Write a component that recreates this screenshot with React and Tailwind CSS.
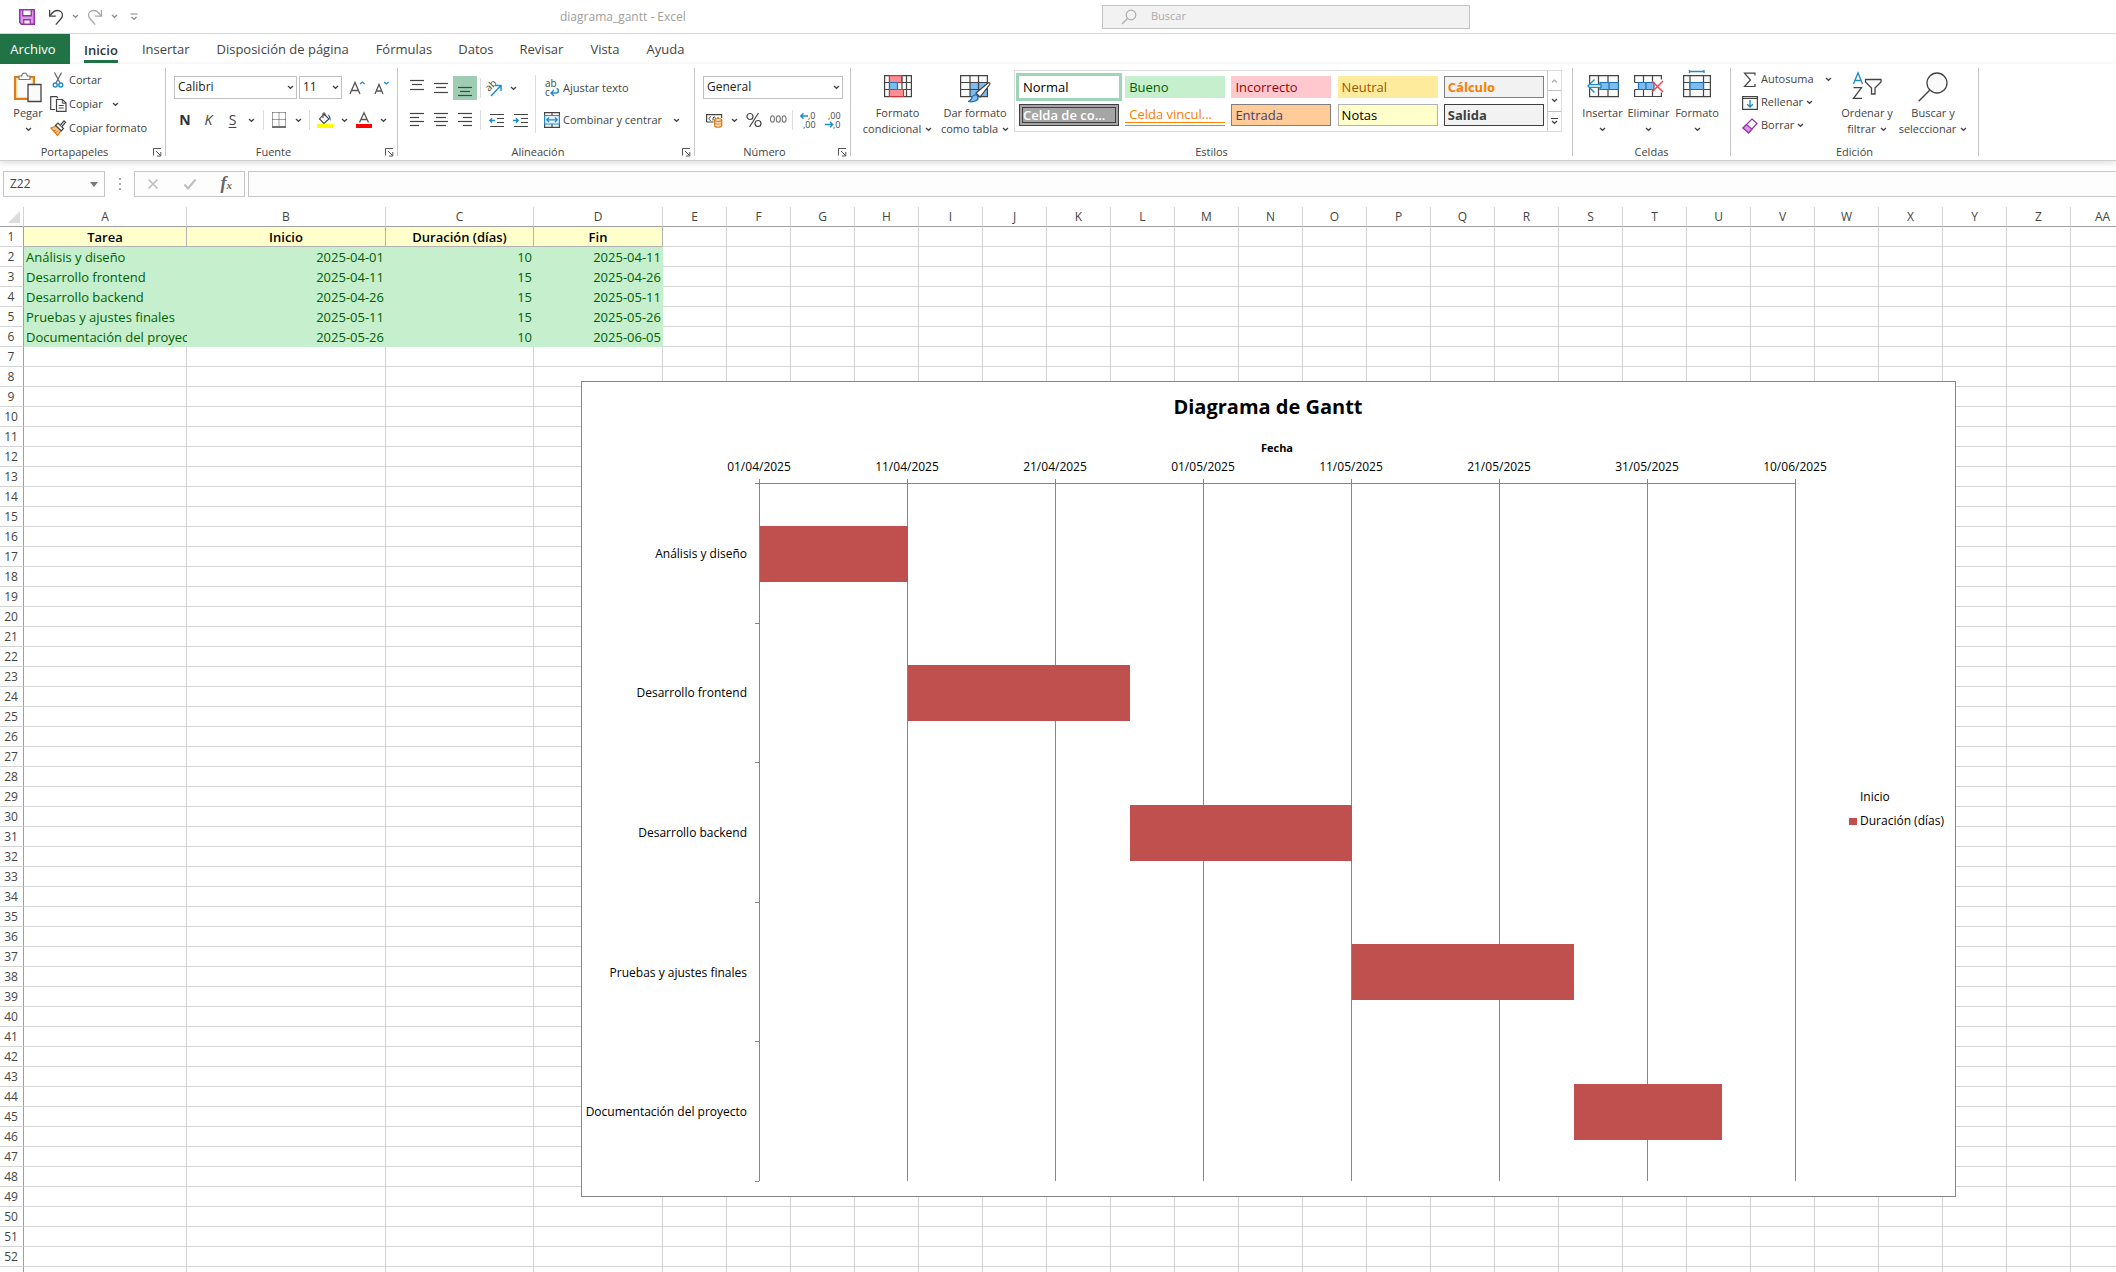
import React from "react";

const INK = "#444444";
const BLUE = "#1e8bcd";

/* ---------- Icons ---------- */

function Chevron({ color = INK }) {
  return (
    <svg width="7" height="5" viewBox="0 0 7 5" fill="none" className="shrink-0">
      <path d="M1 1l2.5 2.3L6 1" stroke={color} strokeWidth="1.3" />
    </svg>
  );
}

function Icon({ w = 16, h = 16, children }) {
  return (
    <svg width={w} height={h} viewBox={`0 0 ${w} ${h}`} fill="none" className="shrink-0 overflow-visible" aria-hidden="true">
      {children}
    </svg>
  );
}

const SaveIcon = () => (
  <Icon>
    <path d="M.75.75h14.5v14.5H2.5L.75 13.5z" fill="#d59be0" stroke="#9a2fae" strokeWidth="1.5" />
    <path d="M3.75.75h8.5v6h-8.5z" fill="#fff" stroke="#9a2fae" strokeWidth="1.3" />
    <path d="M4.75 15.25v-4.5h6.5v4.5z" fill="#fff" stroke="#9a2fae" strokeWidth="1.3" />
  </Icon>
);
const UndoIcon = ({ color = INK, flip }) => (
  <Icon>
    <g transform={flip ? "translate(16 0) scale(-1 1)" : undefined} stroke={color} strokeWidth="1.3">
      <path d="M1.6.8v6.4h6.2" />
      <path d="M1.8 7C4 3.6 6.5 1.5 9.5 1.5c3 0 5 2.2 5 4.6 0 2-1 3.3-2.4 4.7L7.8 15.6" />
    </g>
  </Icon>
);
const CustomizeIcon = () => (
  <Icon w={8} h={8}>
    <path d="M.5 1h7M1.5 4L4 6.500 6.500 4" stroke="#8a8a8a" strokeWidth="1.2" />
  </Icon>
);
const PasteIcon = () => (
  <Icon w={28} h={30}>
    <path d="M1 5h19v22H1z" fill="#fbd9a0" stroke="#e07b1a" strokeWidth="2" />
    <path d="M3.5 7h14v18h-14z" fill="#fafafa" />
    <path d="M5 7.500V4h2.500C8 2 9 1 10.500 1S13 2 13.500 4H16v3.500z" fill="#fff" stroke="#7a7a7a" strokeWidth="1.2" />
    <path d="M14 12.500h13v17H14z" fill="#fafafa" stroke={INK} strokeWidth="1.3" />
  </Icon>
);
const CutIcon = () => (
  <Icon>
    <path d="M4.500.5L10 11M11.500.5L6 11" stroke="#6a6a6a" strokeWidth="1.3" />
    <circle cx="5.2" cy="13" r="2" stroke={BLUE} strokeWidth="1.4" />
    <circle cx="10.8" cy="13" r="2" stroke={BLUE} strokeWidth="1.4" />
  </Icon>
);
const CopyIcon = () => (
  <Icon w={17} h={16}>
    <path d="M5 13.5H.7V.7h6L8 2" stroke={INK} strokeWidth="1.2" />
    <path d="M6.5 3.5h6L16 7v8.3H6.500z" fill="#fff" stroke={INK} strokeWidth="1.2" />
    <path d="M12.300 3.500v3.700H16M8.700 9.500h5M8.700 12h5" stroke={INK} />
  </Icon>
);
const BrushIcon = () => (
  <Icon>
    <path d="M1 8l5.5-2L11 10.5l-3.500 5z" fill="#fbc98a" stroke="#e07b1a" strokeWidth="1.3" />
    <path d="M3 11l3-1M5 13l3-2" stroke="#e07b1a" />
    <path d="M5.500 5.500L8 3l5.500 5.500-2.300 2.300z" fill="#fff" stroke={INK} strokeWidth="1.2" />
    <path d="M10.500 5L14 .8l1.500 1.500L12 6.500" fill="#fff" stroke={INK} strokeWidth="1.2" />
  </Icon>
);
const LauncherIcon = () => (
  <Icon w={9} h={9}>
    <path d="M.5 7.500V.5H8M3 3l4.500 4.500M7.800 4v4H4" stroke="#555" />
  </Icon>
);
const BordersIcon = () => (
  <Icon>
    <path d="M1.5.5v13M8 .5v13M14.500.5v13M1.500.5h13M1.500 7.500h13" stroke={INK} strokeDasharray="1 1" />
    <path d="M1 15h14" stroke="#222" strokeWidth="1.3" />
  </Icon>
);
const FillIcon = () => (
  <Icon>
    <path d="M7 2l5 5-5 4.500L2.500 7z" fill="#fafafa" stroke={INK} strokeWidth="1.1" />
    <path d="M6 6V1.500C6 .5 8 .5 8 1.500V4" stroke={INK} />
    <path d="M10.500 2.500c3 .5 3.500 3.500 3 6.500-1.300-1.500-1-4-3-6.500z" fill="#1e6fb8" />
    <path d="M0 12h16v4H0z" fill="#ffff00" />
  </Icon>
);
const FontColorIcon = () => (
  <Icon>
    <path d="M3.500 10.500L8 .8l4.500 9.700M5 7.500h6" stroke="#555" strokeWidth="1.3" />
    <path d="M0 12h16v4H0z" fill="#ff0000" />
  </Icon>
);
const GrowIcon = ({ small }) => (
  <Icon w={17} h={16}>
    {small ? (
      <path d="M1 14l4-9.500L9 14M2.500 11h5" stroke="#555" strokeWidth="1.3" />
    ) : (
      <path d="M1 14L6 2.500 11 14M2.800 10.500h6.400" stroke="#555" strokeWidth="1.3" />
    )}
    {small ? (
      <path d="M10 2l2.300 2L14.600 2" stroke={BLUE} strokeWidth="1.3" />
    ) : (
      <path d="M11 4l2.300-2L15.600 4" stroke={BLUE} strokeWidth="1.3" />
    )}
  </Icon>
);
const LINES = {
  top: [[0, 0.5, 14], [2, 4.5, 12], [0, 9.5, 14]],
  middle: [[0, 3.5, 14], [2, 7.5, 12], [0, 12.5, 14]],
  bottom: [[0, 7.5, 14], [2, 11.5, 12], [0, 15.5, 14]],
  left: [[0, 1.5, 14], [0, 5.5, 9], [0, 9.5, 14], [0, 13.5, 9]],
  center: [[0, 1.5, 14], [2, 5.5, 12], [0, 9.5, 14], [2, 13.5, 12]],
  right: [[0, 1.5, 14], [5, 5.5, 14], [0, 9.5, 14], [5, 13.5, 14]],
};
const AlignIcon = ({ kind }) => (
  <Icon w={14} h={17}>
    {LINES[kind].map(([a, y, b], i) => (
      <path key={i} d={`M${a} ${y}H${b}`} stroke={INK} strokeWidth="1.2" />
    ))}
  </Icon>
);
const OrientIcon = () => (
  <Icon w={17} h={17}>
    <text fontSize="10" fill={INK} transform="translate(4 12) rotate(-45)" fontFamily="Open Sans, sans-serif">ab</text>
    <path d="M6 16l9.500-10M10.500 5.500H16V11" stroke={BLUE} strokeWidth="1.4" />
  </Icon>
);
const WrapIcon = () => (
  <Icon w={15} h={17}>
    <text x="0" y="7" fontSize="10" fill={INK} fontFamily="Open Sans, sans-serif">ab</text>
    <text x="0" y="16" fontSize="10" fill={INK} fontFamily="Open Sans, sans-serif">c</text>
    <path d="M11.500 8.500c2.500.5 2.500 4.500-.5 4.500H6.500M9 10l-3 3 3 3" stroke={BLUE} strokeWidth="1.4" />
  </Icon>
);
const MergeIcon = () => (
  <Icon>
    <path d="M.6.6h14.800v14.800H.6zM8 .6v14.800" stroke={INK} strokeWidth="1.2" />
    <path d="M.6 3.500h14.800V12H.6z" fill="#e3f1fb" stroke={BLUE} strokeWidth="1.2" />
    <path d="M3 7.800h10M5 5.500L2.800 7.800 5 10M11 5.500l2.200 2.300L11 10" stroke={BLUE} strokeWidth="1.2" />
  </Icon>
);
const IndentIcon = ({ out }) => (
  <Icon w={15} h={15}>
    <path d="M1 1.500h14M8 5.500h7M8 9.500h7M1 13.500h14" stroke={INK} strokeWidth="1.2" />
    {out ? (
      <path d="M.8 7.500H6M3 5.200L.8 7.500 3 9.800" stroke={BLUE} strokeWidth="1.4" />
    ) : (
      <path d="M0 7.500h5M3 5.200l2.200 2.300L3 9.800" stroke={BLUE} strokeWidth="1.4" />
    )}
  </Icon>
);
const MoneyIcon = () => (
  <Icon w={17} h={16}>
    <path d="M.6 10V2.600h15V6M.6 10h7" stroke={INK} strokeWidth="1.2" />
    <path d="M5 4.800C2.500 4.800 2.500 8.500 5 8.500M7 8.500V6l1.200-1.200L9.500 6v2.500M12 5v2" stroke={INK} />
    <path d="M8.700 8v5.500c0 2.200 7 2.200 7 0V8" fill="#fde3c8" stroke="#e07b1a" strokeWidth="1.3" />
    <ellipse cx="12.2" cy="8" rx="3.5" ry="1.4" fill="#fff" stroke="#e07b1a" strokeWidth="1.3" />
    <path d="M8.700 10.800c0 1.800 7 1.800 7 0" stroke="#e07b1a" />
  </Icon>
);
const PercentIcon = () => (
  <Icon>
    <circle cx="4" cy="4.5" r="3" stroke={INK} strokeWidth="1.2" />
    <circle cx="12" cy="11.5" r="3" stroke={INK} strokeWidth="1.2" />
    <path d="M12.500 1l-9 14" stroke={INK} strokeWidth="1.2" />
  </Icon>
);
const ThousandsIcon = () => (
  <Icon w={17} h={10}>
    {[2.5, 8.3, 14.1].map((x) => (
      <ellipse key={x} cx={x} cy="4" rx="2" ry="3.3" stroke="#777" strokeWidth="1.1" />
    ))}
  </Icon>
);
const DecimalIcon = ({ less }) => (
  <Icon>
    <text x={less ? 3 : 8} y="7" fontSize="9" fill={INK} fontFamily="Open Sans, sans-serif">{less ? ",00" : ",0"}</text>
    <text x={less ? 8 : 3} y="16" fontSize="9" fill={INK} fontFamily="Open Sans, sans-serif">{less ? ",0" : ",00"}</text>
    {less ? (
      <path d="M0 12.500h7.500M5 9.800l2.700 2.700L5 15.200" stroke={BLUE} strokeWidth="1.4" />
    ) : (
      <path d="M1 4h7M3.500 1.300L.8 4l2.700 2.700" stroke={BLUE} strokeWidth="1.4" />
    )}
  </Icon>
);
const CondFormatIcon = () => (
  <Icon w={28} h={26}>
    <path d="M.6 3.600h26.800v21H.6z" fill="#fafafa" />
    <path d="M.6 3.600h26.800v21H.6zM.6 10.500h26.800M.6 17.500h26.800M5.500 3.600v21M18 3.600v21M22.500 3.600v21" stroke={INK} strokeWidth="1.2" />
    <path d="M5.500 3.600h12v6.900h-12z" fill="#ff8f95" stroke="#d13438" strokeWidth="1.2" />
    <path d="M5.500 10.500h8v7h-8z" fill="#7fbcee" stroke="#1e6fb8" strokeWidth="1.2" />
    <path d="M5.500 17.500h14v7h-14z" fill="#ff8f95" stroke="#d13438" strokeWidth="1.2" />
  </Icon>
);
const TableFormatIcon = () => (
  <Icon w={31} h={30}>
    <path d="M.6 3.600h26.800v21H.6z" fill="#fafafa" />
    <path d="M10 10.500h17.400v14H10z" fill="#7fbcee" />
    <path d="M.6 3.600h26.800v21H.6zM.6 10.500h26.800M.6 17.500h26.800M10 3.600v21M18.500 3.600v21" stroke={INK} strokeWidth="1.2" />
    <path d="M16 21l12-10c1.500-.8 2.500.3 1.700 1.500L20 25z" fill="#fff" stroke={INK} strokeWidth="1.2" />
    <path d="M8 29.500c3 0 3-2.500 4.500-5s5-2 5.500 1-4 5-10 4z" fill="#7fbcee" stroke="#1e6fb8" strokeWidth="1.2" />
  </Icon>
);
const InsertCellsIcon = () => (
  <Icon w={32} h={26}>
    <path d="M2.600 3.600h28.800v21H2.600zM11.500 3.600v21M21 3.600v21" fill="#fafafa" stroke={INK} strokeWidth="1.2" />
    <path d="M13 10.500h18.400v7H13zM22 10.500v7" fill="#7fbcee" stroke="#1e6fb8" strokeWidth="1.2" />
    <path d="M1 14l6.500-6.500v5H14v3H7.500v5z" fill="#fff" />
    <path d="M7.500 7.500L1 14l6.500 6.500M2.500 12.600H14v2.800H2.500" stroke={BLUE} strokeWidth="1.4" />
  </Icon>
);
const DeleteCellsIcon = () => (
  <Icon w={30} h={26}>
    <path d="M.6 10.500V3.600h26.800v4M.6 17.500v7h26.800v-4M9.500 3.600v7M18.500 3.600v7M9.500 17.500v7M18.500 17.500v7M.6 10.500h4M.6 17.500h20" stroke={INK} strokeWidth="1.2" />
    <path d="M4.500 10.500H20v7H4.500zM12 10.500v7" fill="#7fbcee" stroke="#1e6fb8" strokeWidth="1.2" />
    <path d="M18 9l11 11M29 9L18 20" stroke="#f0484d" strokeWidth="1.5" />
  </Icon>
);
const FormatCellsIcon = () => (
  <Icon w={28} h={28}>
    <path d="M.6 5.600h26.800v21H.6zM.6 12.500h26.800M.6 19.500h26.800M7 5.600v21M20.500 5.600v21" fill="#fafafa" stroke={INK} strokeWidth="1.2" />
    <path d="M7 12.500h13.500v7H7z" fill="#7fbcee" stroke="#1e6fb8" strokeWidth="1.2" />
    <path d="M6.500 1.500H21M6.500 0v3M21 0v3" stroke={BLUE} strokeWidth="1.3" />
  </Icon>
);
const SigmaIcon = () => (
  <Icon>
    <path d="M13 3.500V1.200H2.500L8.500 8l-6 6.500H13V12" stroke={INK} strokeWidth="1.2" />
  </Icon>
);
const FillDownIcon = () => (
  <Icon>
    <path d="M.6 1.600h14.800v12.800H.6zM.6 3.500h14.800" fill="#fafafa" stroke={INK} strokeWidth="1.2" />
    <path d="M8 5v7M5.200 9.300L8 12.100l2.800-2.800" stroke={BLUE} strokeWidth="1.4" />
  </Icon>
);
const EraserIcon = () => (
  <Icon>
    <path d="M10 1l5 4.500L6.500 15 1 10z" fill="#fff" stroke="#9a2fae" strokeWidth="1.2" />
    <path d="M1 10l3.500-3.500L10 11l-3.500 4z" fill="#d59be0" stroke="#9a2fae" strokeWidth="1.2" />
  </Icon>
);
const SortIcon = () => (
  <Icon w={30} h={28}>
    <path d="M1.500 12L6 .8 10.500 12M3 8.500h6" stroke={BLUE} strokeWidth="1.4" />
    <path d="M1.500 15.600h8L1.500 26.400h8.500" stroke={INK} strokeWidth="1.3" />
    <path d="M13.500 7.500H29V10l-6 6v6h-3.500v-6l-6-6z" fill="#fff" stroke={INK} strokeWidth="1.3" />
  </Icon>
);
const FindIcon = () => (
  <Icon w={30} h={30}>
    <circle cx="19" cy="11" r="10" fill="#fafafa" stroke={INK} strokeWidth="1.3" />
    <path d="M11.700 18.300L.7 29.300" stroke={INK} strokeWidth="1.4" />
  </Icon>
);
const SearchIcon = () => (
  <Icon>
    <circle cx="10" cy="6" r="4.8" stroke="#adadad" strokeWidth="1.2" />
    <path d="M6.500 9.500l-5.500 5.500" stroke="#adadad" strokeWidth="1.2" />
  </Icon>
);

/* ---------- Ribbon pieces ---------- */

function Group({ label, width, launcher, children }) {
  return (
    <>
      <section className={`flex h-[92px] shrink-0 flex-col ${width}`} aria-label={label}>
        <div className="flex h-[76px] justify-start">{children}</div>
        <div className="flex h-4 items-center">
          <span className={`flex-1 text-center text-[11px] leading-4 ${launcher ? "pr-1" : ""}`}>{label}</span>
          {launcher && (
            <button aria-label={`Opciones de ${label}`} className="mr-[3px] flex">
              <LauncherIcon />
            </button>
          )}
        </div>
      </section>
      <div className="h-[88px] w-px shrink-0 bg-[#c6c6c6]" />
    </>
  );
}

function Sep({ tall }) {
  return <div className={`w-px shrink-0 bg-[#dcdcdc] ${tall ? "h-[58px]" : "h-5"}`} />;
}

function Tool({ label, children, width = "w-6", arrow, active }) {
  return (
    <button
      aria-label={label}
      className={`flex h-6 shrink-0 items-center justify-center gap-2 ${width} ${active ? "bg-[#9fcdb3]" : ""}`}
    >
      {children}
      {arrow && <Chevron />}
    </button>
  );
}

function Combo({ label, value, width }) {
  return (
    <div className={`relative h-6 shrink-0 ${width}`}>
      <select
        aria-label={label}
        defaultValue={value}
        className="block h-[23px] w-full appearance-none border border-[#c0c0c0] bg-white pb-0.5 pl-[3px] text-xs text-[#222]"
      >
        <option>{value}</option>
      </select>
      <span className="pointer-events-none absolute top-[9px] right-[3px]">
        <Chevron />
      </span>
    </div>
  );
}

function TextTool({ icon, label, arrow, height = "h-6" }) {
  return (
    <button className={`flex items-center gap-[3px] text-[11px] whitespace-nowrap ${height}`}>
      <span className="flex w-4 justify-center">{icon}</span>
      <span>{label}</span>
      {arrow && <span className={arrow}><Chevron /></span>}
    </button>
  );
}

function BigTool({ icon, lines, width, iconTop = "pt-0.5" }) {
  return (
    <button className={`flex shrink-0 flex-col items-center text-[11px] leading-4 whitespace-nowrap ${width}`}>
      <span className={`flex h-8 items-start ${iconTop}`}>{icon}</span>
      <span className="mt-[3px]">{lines[0]}</span>
      <span className="flex h-4 items-center gap-1">
        {lines[1]}
        <Chevron />
      </span>
    </button>
  );
}

const STYLES = [
  ["Normal", "bg-white pl-1 text-black outline-3 outline-[#9fd5b7]"],
  ["Bueno", "bg-[#c6efce] pl-1 text-[#006100]"],
  ["Incorrecto", "bg-[#ffc7ce] pl-1 text-[#9c0006]"],
  ["Neutral", "bg-[#ffeb9c] pl-1 text-[#9c5700]"],
  ["Cálculo", "border border-[#7f7f7f] bg-[#f2f2f2] pl-[3px] font-bold text-[#fa7d00]"],
  ["Celda de co...", "border-4 border-double border-[#3f3f3f] bg-[#a5a5a5] font-semibold text-white"],
  ["Celda vincul...", "border-b-4 border-double border-[#ff8001] bg-white pt-0.5 pl-1 text-[#fa7d00]"],
  ["Entrada", "border border-[#7f7f7f] bg-[#ffcc99] pl-[3px] text-[#3f3f76]"],
  ["Notas", "border border-[#b2b2b2] bg-[#ffffcc] pl-[3px] text-black"],
  ["Salida", "border border-[#3f3f3f] bg-[#f2f2f2] pl-[3px] font-bold text-[#3f3f3f]"],
];

const TABS = [
  ["Insertar", "ml-6"],
  ["Disposición de página", "ml-[27px]"],
  ["Fórmulas", "ml-[27px]"],
  ["Datos", "ml-[26px]"],
  ["Revisar", "ml-[26px]"],
  ["Vista", "ml-[27px]"],
  ["Ayuda", "ml-[27px]"],
];

function TitleBar() {
  return (
    <header className="flex h-[34px] items-center border-b border-[#d6d6d6] bg-white">
      <div className="flex w-[560px] items-center pl-[19px]">
        <button aria-label="Guardar"><SaveIcon /></button>
        <button aria-label="Deshacer" className="ml-[13px] flex items-center gap-2">
          <UndoIcon /><Chevron color="#8a8a8a" />
        </button>
        <button aria-label="Rehacer" className="ml-2 flex items-center gap-2">
          <UndoIcon color="#a8a8a8" flip /><Chevron color="#8a8a8a" />
        </button>
        <button aria-label="Personalizar barra" className="ml-3"><CustomizeIcon /></button>
      </div>
      <h1 className="text-xs text-[#a0a0a0]">diagrama_gantt - Excel</h1>
      <div className="ml-auto flex h-6 w-[368px] items-center gap-3 border border-[#c3c3c3] bg-[#f2f2f2] pl-[18px] xl:mr-[646px]">
        <SearchIcon />
        <input aria-label="Buscar" placeholder="Buscar" className="min-w-0 flex-1 bg-transparent pl-0.5 text-[11px] outline-none placeholder:text-[#ababab]" />
      </div>
    </header>
  );
}

function TabBar() {
  return (
    <nav className="flex h-[30px] items-stretch bg-white text-[13px]">
      <button className="w-[70px] bg-[#217346] pt-0.5 pr-1 text-white">Archivo</button>
      <button className="ml-[14px] flex flex-col items-center font-semibold text-[#333]">
        <span className="pt-1.5 leading-5">Inicio</span>
        <span className="h-[3px] w-full bg-[#217346]" />
      </button>
      {TABS.map(([t, m]) => (
        <button key={t} className={`pt-0.5 ${m}`}>{t}</button>
      ))}
    </nav>
  );
}

function Ribbon() {
  return (
    <div className="relative z-10 flex shrink-0 items-start overflow-hidden border-b border-[#cfcfcf] bg-white pt-1 shadow-[0_2px_6px_rgba(0,0,0,0.14)]">
      <Group label="Portapapeles" width="w-[165px]" launcher>
        <div className="flex w-[50px] pt-0.5 pl-1">
          <BigTool icon={<PasteIcon />} lines={["Pegar"]} width="w-[48px]" />
        </div>
        <div className="flex flex-col items-start">
          <TextTool icon={<CutIcon />} label="Cortar" />
          <TextTool icon={<CopyIcon />} label="Copiar" arrow="ml-1.5" />
          <TextTool icon={<BrushIcon />} label="Copiar formato" />
        </div>
      </Group>

      <Group label="Fuente" width="w-[231px]" launcher>
        <div className="flex flex-col gap-2 pt-2 pl-2">
          <div className="flex items-center gap-0.5">
            <Combo label="Fuente" value="Calibri" width="w-[123px]" />
            <Combo label="Tamaño de fuente" value="11" width="w-[43px]" />
            <Tool label="Aumentar tamaño" width="w-[26px]"><GrowIcon /></Tool>
            <Tool label="Disminuir tamaño" width="w-[20px]"><GrowIcon small /></Tool>
          </div>
          <div className="flex items-center">
            <Tool label="Negrita" width="w-[22px]"><b className="text-sm text-[#333]">N</b></Tool>
            <Tool label="Cursiva" width="w-[25px]"><i className="text-sm">K</i></Tool>
            <Tool label="Subrayado" width="w-[42px]" arrow><span className="pr-1 text-sm underline underline-offset-2">S</span></Tool>
            <Sep />
            <Tool label="Bordes" width="w-[45px]" arrow><BordersIcon /></Tool>
            <Sep />
            <Tool label="Color de relleno" width="w-[44px]" arrow><FillIcon /></Tool>
            <Tool label="Color de fuente" width="w-[34px]" arrow><FontColorIcon /></Tool>
          </div>
        </div>
      </Group>

      <Group label="Alineación" width="w-[296px]" launcher>
        <div className="flex flex-col gap-2 pt-2 pl-[7px]">
          <div className="flex items-center">
            <Tool label="Alinear arriba"><AlignIcon kind="top" /></Tool>
            <Tool label="Alinear en el medio"><AlignIcon kind="middle" /></Tool>
            <Tool label="Alinear abajo" active><AlignIcon kind="bottom" /></Tool>
            <span className="w-[3px]" />
            <Sep />
            <Tool label="Orientación" width="w-[40px]" arrow><OrientIcon /></Tool>
          </div>
          <div className="flex items-center">
            <Tool label="Alinear a la izquierda"><AlignIcon kind="left" /></Tool>
            <Tool label="Centrar"><AlignIcon kind="center" /></Tool>
            <Tool label="Alinear a la derecha"><AlignIcon kind="right" /></Tool>
            <span className="w-[3px]" />
            <Sep />
            <span className="w-[3px]" />
            <Tool label="Disminuir sangría"><IndentIcon out /></Tool>
            <Tool label="Aumentar sangría"><IndentIcon /></Tool>
          </div>
        </div>
        <div className="ml-[3px] pt-[7px]"><Sep tall /></div>
        <div className="flex flex-col items-start gap-2 pt-2 pl-2">
          <TextTool icon={<WrapIcon />} label="Ajustar texto" />
          <TextTool icon={<MergeIcon />} label="Combinar y centrar" arrow="ml-2" />
        </div>
      </Group>

      <Group label="Número" width="w-[155px]" launcher>
        <div className="flex flex-col gap-2 pt-2 pl-2">
          <Combo label="Formato de número" value="General" width="w-[140px]" />
          <div className="flex items-center">
            <Tool label="Formato de contabilidad" width="w-[38px]" arrow><MoneyIcon /></Tool>
            <Tool label="Estilo porcentual" width="w-[26px]"><PercentIcon /></Tool>
            <Tool label="Estilo millares" width="w-[22px]"><ThousandsIcon /></Tool>
            <span className="w-[3px]" />
            <Sep />
            <Tool label="Aumentar decimales" width="w-[30px]"><DecimalIcon /></Tool>
            <Tool label="Disminuir decimales" width="w-[20px]"><DecimalIcon less /></Tool>
          </div>
        </div>
      </Group>

      <Group label="Estilos" width="w-[721px]">
        <div className="flex pt-0.5 pl-2">
          <BigTool icon={<CondFormatIcon />} lines={["Formato", "condicional"]} width="w-[77px]" />
          <BigTool icon={<TableFormatIcon />} lines={["Dar formato", "como tabla"]} width="w-[78px]" />
        </div>
        <div className="mt-0.5 flex h-[62px] w-[548px] border border-[#dcdcdc]">
          <div className="grid w-[532px] grid-cols-5 content-start gap-1.5 pt-[5px] pr-[3px] pl-1">
            {STYLES.map(([name, cls]) => (
              <button key={name} className={`flex h-[22px] w-[100px] items-center text-[13px] leading-4 whitespace-nowrap ${cls}`}>
                {name}
              </button>
            ))}
          </div>
          <div className="flex flex-1 flex-col border-l border-[#c6c6c6]">
            <button aria-label="Fila anterior" className="flex flex-1 rotate-180 items-center justify-center"><Chevron color="#a8a8a8" /></button>
            <button aria-label="Fila siguiente" className="flex flex-1 items-center justify-center border-y border-[#c0c0c0]"><Chevron /></button>
            <button aria-label="Más estilos" className="flex flex-1 flex-col items-center justify-center gap-px">
              <span className="h-px w-[7px] bg-[#444]" /><Chevron />
            </button>
          </div>
        </div>
      </Group>

      <Group label="Celdas" width="w-[157px]">
        <div className="flex pt-0.5 pl-[7px]">
          <BigTool icon={<InsertCellsIcon />} lines={["Insertar"]} width="w-[45px]" />
          <BigTool icon={<DeleteCellsIcon />} lines={["Eliminar"]} width="w-[47px]" />
          <BigTool icon={<FormatCellsIcon />} lines={["Formato"]} width="w-[50px]" iconTop="pt-0" />
        </div>
      </Group>

      <Group label="Edición" width="w-[247px]">
        <div className="flex w-[104px] flex-col items-start pl-[11px]">
          <TextTool icon={<SigmaIcon />} label="Autosuma" arrow="ml-2" height="h-[23px]" />
          <TextTool icon={<FillDownIcon />} label="Rellenar" height="h-[23px]" arrow="ml-0" />
          <TextTool icon={<EraserIcon />} label="Borrar" height="h-[23px]" arrow="ml-0" />
        </div>
        <div className="flex pt-0.5">
          <BigTool icon={<SortIcon />} lines={["Ordenar y", "filtrar"]} width="w-[64px]" />
          <BigTool icon={<FindIcon />} lines={["Buscar y", "seleccionar"]} width="w-[68px]" />
        </div>
      </Group>
    </div>
  );
}

function FormulaBar() {
  return (
    <div className="flex h-[46px] shrink-0 items-start bg-white pt-[10px]">
      <div className="ml-[3px] flex h-[26px] w-[102px] items-center border border-[#c6c6c6] bg-[#fdfdfd] pr-1.5">
        <input aria-label="Cuadro de nombres" defaultValue="Z22" className="min-w-0 flex-1 bg-transparent pl-1.5 text-xs text-[#444] outline-none" />
        <svg width="8" height="5" viewBox="0 0 8 5"><path d="M0 0h8L4 5z" fill="#777" /></svg>
      </div>
      <div className="flex h-[26px] w-[29px] flex-col items-center justify-center gap-[3px]">
        <span className="h-0.5 w-0.5 bg-[#a8a8a8]" />
        <span className="h-0.5 w-0.5 bg-[#a8a8a8]" />
        <span className="h-0.5 w-0.5 bg-[#a8a8a8]" />
      </div>
      <div className="flex h-[26px] w-[111px] items-center justify-around border border-[#c6c6c6] bg-[#fdfdfd]">
        <button aria-label="Cancelar">
          <Icon w={12} h={12}><path d="M1.5 1.5l9 9M10.500 1.500l-9 9" stroke="#bdbdbd" strokeWidth="1.6" /></Icon>
        </button>
        <button aria-label="Introducir">
          <Icon w={14} h={12}><path d="M1.500 6.500l3.500 4 7.500-9" stroke="#bdbdbd" strokeWidth="2" /></Icon>
        </button>
        <button aria-label="Insertar función" className="font-['Liberation_Serif',serif] text-lg leading-5 font-bold text-[#666] italic">
          f<span className="text-[11px]">x</span>
        </button>
      </div>
      <input aria-label="Barra de fórmulas" className="ml-[3px] h-[26px] min-w-0 flex-1 border border-r-0 border-[#c6c6c6] bg-[#fdfdfd] px-2 text-xs outline-none" />
    </div>
  );
}

/* ---------- Sheet ---------- */

const COLUMNS = [..."ABCDEFGHIJKLMNOPQRSTUVWXYZ", "AA"];
const COL_WIDTH = { A: "w-[163px]", B: "w-[199px]", C: "w-[148px]", D: "w-[129px]" };
const HEADERS = ["Tarea", "Inicio", "Duración (días)", "Fin"];
const TASKS = [
  ["Análisis y diseño", "2025-04-01", "10", "2025-04-11"],
  ["Desarrollo frontend", "2025-04-11", "15", "2025-04-26"],
  ["Desarrollo backend", "2025-04-26", "15", "2025-05-11"],
  ["Pruebas y ajustes finales", "2025-05-11", "15", "2025-05-26"],
  ["Documentación del proyecto", "2025-05-26", "10", "2025-06-05"],
];

function Cell({ row, col }) {
  if (row === 1 && col < 4) {
    return (
      <td className="h-5 border-r border-b border-[#b2b2b2] bg-[#ffffcc] p-0 pt-px text-center text-[13px] leading-[18px] font-semibold text-black">
        {HEADERS[col]}
      </td>
    );
  }
  if (row > 1 && row < 7 && col < 4) {
    return (
      <td className={`h-5 overflow-hidden bg-[#c6efce] px-0.5 py-0 text-[13px] leading-5 whitespace-nowrap text-[#006100] ${col ? "text-right" : "text-left"}`}>
        {TASKS[row - 2][col]}
      </td>
    );
  }
  return <td className="h-5 border-r border-b border-[#d4d4d4] p-0" />;
}

function Sheet() {
  return (
    <table className="w-[2135px] table-fixed border-separate border-spacing-0 text-[#444]">
      <colgroup>
        <col className="w-6" />
        {COLUMNS.map((c) => <col key={c} className={COL_WIDTH[c] || "w-16"} />)}
      </colgroup>
      <thead>
        <tr>
          <th className="h-5 border-r border-b border-r-[#d4d4d4] border-b-[#9f9f9f] p-0">
            <svg width="12" height="12" viewBox="0 0 12 12" className="mr-[3px] ml-auto"><path d="M12 0v12H0z" fill="#dcdcdc" /></svg>
          </th>
          {COLUMNS.map((c) => (
            <th key={c} className="h-5 border-r border-b border-r-[#d4d4d4] border-b-[#9f9f9f] p-0 text-xs leading-[19px] font-normal">{c}</th>
          ))}
        </tr>
      </thead>
      <tbody>
        {Array.from({ length: 53 }, (_, i) => i + 1).map((r) => (
          <tr key={r}>
            <th className="h-5 border-r border-b border-r-[#9f9f9f] border-b-[#d4d4d4] p-0 pt-px pr-px text-xs leading-[18px] font-normal">{r}</th>
            {COLUMNS.map((c, i) => <Cell key={c} row={r} col={i} />)}
          </tr>
        ))}
      </tbody>
    </table>
  );
}

/* ---------- Gantt chart ---------- */

const DATES = ["01/04/2025", "11/04/2025", "21/04/2025", "01/05/2025", "11/05/2025", "21/05/2025", "31/05/2025", "10/06/2025"];
const STARTS = [0, 10, 25, 40, 55];
const PLOT = { x: 178, y: 102, w: 1036, h: 698 };
const DAY = PLOT.w / 70;
const BAND = PLOT.h / 5;

function GanttChart() {
  const px = (n) => Math.round(n) + 0.5;
  return (
    <svg width="1375" height="816" viewBox="0 0 1375 816" fontFamily="'Open Sans', sans-serif" fontSize="12" role="img" aria-label="Diagrama de Gantt">
      <rect x="0.5" y="0.5" width="1374" height="815" fill="#fff" stroke="#868686" />
      <text x="687" y="33" textAnchor="middle" fontSize="20" fontWeight="700">Diagrama de Gantt</text>
      <text x="696" y="71" textAnchor="middle" fontSize="11" fontWeight="700">Fecha</text>
      {DATES.map((d, i) => (
        <g key={d}>
          <text x={PLOT.x + i * 10 * DAY} y="90" textAnchor="middle">{d}</text>
          <path d={`M${px(PLOT.x + i * 10 * DAY)} ${PLOT.y - 4}V${PLOT.y + PLOT.h}`} stroke="#868686" />
        </g>
      ))}
      <path d={`M${PLOT.x - 4} ${PLOT.y + 0.5}H${PLOT.x + PLOT.w + 1}`} stroke="#868686" />
      {TASKS.map(([name, , days], i) => {
        const y = PLOT.y + i * BAND;
        return (
          <g key={name}>
            <text x="166" y={Math.round(y + BAND / 2 + 5)} textAnchor="end">{name}</text>
            <path d={`M${PLOT.x - 4} ${px(y + BAND)}h4`} stroke="#868686" />
            <rect x={PLOT.x + STARTS[i] * DAY + 1} y={Math.round(y + BAND * 0.3 + 0.8)} width={days * DAY} height="56" fill="#c0504d" />
          </g>
        );
      })}
      <text x="1279" y="420">Inicio</text>
      <rect x="1268" y="437" width="8" height="7" fill="#c0504d" />
      <text x="1279" y="444">Duración (días)</text>
    </svg>
  );
}

export default function App() {
  return (
    <div className="flex h-screen flex-col overflow-hidden bg-white font-['Open_Sans','Noto_Sans',sans-serif] text-[#444]">
      <TitleBar />
      <TabBar />
      <Ribbon />
      <FormulaBar />
      <main className="relative min-h-0 flex-1 overflow-hidden">
        <Sheet />
        <div className="absolute top-[174px] left-[581px]">
          <GanttChart />
        </div>
      </main>
    </div>
  );
}
